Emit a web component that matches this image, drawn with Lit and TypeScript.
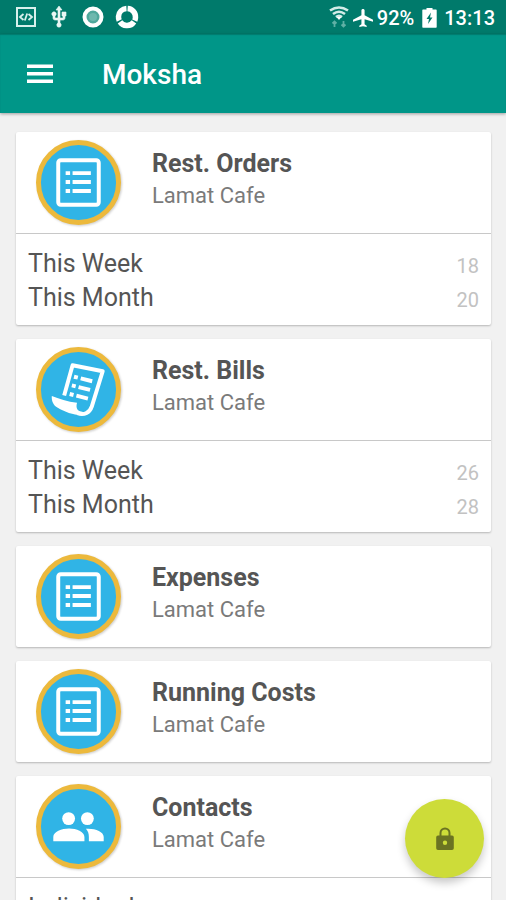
import { LitElement, html, svg, css, nothing } from "lit";
import { customElement, property } from "lit/decorators.js";

type IconName = "list" | "bill" | "people";

interface Row {
  label: string;
  count: string;
}

interface Section {
  title: string;
  subtitle: string;
  icon: IconName;
  rows: Row[];
}

const sections: Section[] = [
  {
    title: "Rest. Orders",
    subtitle: "Lamat Cafe",
    icon: "list",
    rows: [
      { label: "This Week", count: "18" },
      { label: "This Month", count: "20" },
    ],
  },
  {
    title: "Rest. Bills",
    subtitle: "Lamat Cafe",
    icon: "bill",
    rows: [
      { label: "This Week", count: "26" },
      { label: "This Month", count: "28" },
    ],
  },
  { title: "Expenses", subtitle: "Lamat Cafe", icon: "list", rows: [] },
  { title: "Running Costs", subtitle: "Lamat Cafe", icon: "list", rows: [] },
  {
    title: "Contacts",
    subtitle: "Lamat Cafe",
    icon: "people",
    rows: [{ label: "Individuals", count: "" }],
  },
];

const glyphs = {
  list: svg`
    <rect x="22.5" y="20.5" width="41" height="45" rx="2.5" fill="none" stroke="#fff" stroke-width="4" />
    <path d="M30 31.5h4.500v4h-4.500zM37 31.500h18.500v4H37zM30 40.500h4.500v4h-4.500zM37 40.500h18.500v4H37zM30 49.500h4.500v4h-4.500zM37 49.500h18.500v4H37z" fill="#fff" />
  `,
  bill: svg`
    <path d="M28.500 49 37 18.500 67.500 24.500 56.500 60C54.500 66 49 69.500 42 67" fill="none" stroke="#fff" stroke-width="4" stroke-linejoin="round" />
    <path d="M16 49.500C23 52.500 32 55 41.500 56.500C40 62 42 65.500 47 65.500V69C39 69.500 29 65.500 22 61.500C17.500 59 15.500 54.500 16 49.500z" fill="#fff" />
    <g transform="rotate(14 45 41)" fill="#fff">
      <path d="M36 30h4v4h-4zM43 30h12v4H43zM36 39h4v4h-4zM43 39h12v4H43zM36 48h4v4h-4zM43 48h12v4H43z" />
    </g>
  `,
  people: svg`
    <circle cx="33" cy="35" r="6.500" fill="#fff" />
    <circle cx="52" cy="35" r="6.500" fill="#fff" />
    <path d="M17.500 58V53.500C17.500 48.500 26 45 33.500 45S49 48.500 49 53.500V58zM50.500 45.300C59 44.500 68.500 48 68.500 53.500V58H53.500V53.500C53.500 50 52.500 47.500 50.500 45.300z" fill="#fff" />
  `,
};

@customElement("status-bar")
export class StatusBar extends LitElement {
  static styles = css`
    :host {
      display: flex;
      align-items: center;
      justify-content: space-between;
      height: 34px;
      padding: 0 11px 0 16px;
      background: #007a6b;
      color: #fff;
      font-size: 20px;
      line-height: 24px;
      font-weight: 500;
    }
    .group {
      display: flex;
      align-items: center;
    }
    .notices {
      gap: 11px;
    }
    .system {
      padding-top: 2px;
    }
    .percent {
      margin: 0 8px 0 4px;
    }
    .clock {
      margin-left: 7px;
    }
    .plane {
      margin-left: 4px;
    }
    svg {
      display: block;
    }
  `;

  render() {
    return html`
      <div class="group notices">
        <svg width="20" height="22" viewBox="0 0 20 22" fill="none" stroke="#d8f0ec" aria-hidden="true">
          <rect x="1" y="2" width="18" height="18" stroke-width="2" />
          <path d="M7.500 8 4 11l3.500 3M12.500 8l3.500 3-3.500 3M11.200 7.500 8.800 14.500" stroke-width="1.800" />
        </svg>
        <svg width="24" height="24" viewBox="0 0 24 24" fill="#e8f6f4" stroke="#e8f6f4" stroke-width="0.6" aria-hidden="true">
          <path d="M15 7v4h1v2h-3V5h2l-3-4-3 4h2v8H8v-2.070c.7-.370 1.200-1.080 1.200-1.930 0-1.210-.990-2.200-2.200-2.200S4.800 7.790 4.800 9c0 .850.500 1.560 1.200 1.930V13c0 1.110.890 2 2 2h3v3.050c-.710.370-1.200 1.100-1.200 1.950a2.200 2.200 0 0 0 4.400 0c0-.850-.490-1.580-1.200-1.950V15h3c1.110 0 2-.890 2-2v-2h1V7z" />
        </svg>
        <svg width="22" height="22" viewBox="0 0 22 22" aria-hidden="true">
          <circle cx="11" cy="11" r="8.500" fill="#4fa89c" stroke="#fff" stroke-width="4" />
          <circle cx="11" cy="11" r="4" fill="#6db8ae" />
        </svg>
        <svg width="24" height="24" viewBox="0 0 24 24" fill="none" stroke="#fff" stroke-width="5.500" aria-hidden="true">
          <circle cx="12" cy="12" r="8.500" stroke-dasharray="16.300 1.500" transform="rotate(-86 12 12)" />
        </svg>
      </div>
      <div class="group system">
        <svg width="20" height="24" viewBox="0 0 20 24" aria-hidden="true">
          <path d="M1 4.500Q10-1.500 19 4.500M4 8Q10 3.500 16 8M7 11Q10 8.500 13 11" fill="none" stroke="#d3ece8" stroke-width="2.600" />
          <path d="M7.500 11h5l-2.500 3z" fill="#fff" />
          <path d="M5.500 21v-5M3.500 17.500l2-2 2 2M14.500 15v5M12.500 18.500l2 2 2-2" fill="none" stroke="#5fb0a5" stroke-width="1.800" />
        </svg>
        <svg class="plane" width="20" height="20" viewBox="2 1 19 22" preserveAspectRatio="none" fill="#fff" aria-hidden="true">
          <path d="M21 16v-2l-8-5V3.500c0-.830-.670-1.500-1.500-1.500S10 2.670 10 3.500V9l-8 5v2l8-2.500V19l-2 1.500V22l3.500-1 3.500 1v-1.500L13 19v-5.500l8 2.500z" />
        </svg>
        <span class="percent">92%</span>
        <svg width="15" height="20" viewBox="0 0 15 20" aria-hidden="true">
          <path d="M4.500 0h6v1.500H14a.7.7 0 0 1 .7.700V19a.7.7 0 0 1-.7.700H1A.7.700 0 0 1 .300 19V2.200A.7.700 0 0 1 1 1.500h3.500z" fill="#fff" />
          <path d="M9 4.500 4.500 11H7L6 16l4.500-6.500H8z" fill="#007a6b" />
        </svg>
        <span class="clock">13:13</span>
      </div>
    `;
  }
}

@customElement("summary-card")
export class SummaryCard extends LitElement {
  @property({ attribute: false }) section!: Section;

  static styles = css`
    :host {
      display: block;
      background: #fff;
      border-radius: 2px;
      box-shadow: 0 1px 2px rgba(0, 0, 0, 0.24);
    }
    .head {
      display: flex;
      align-items: center;
      gap: 31px;
      min-height: 101px;
      padding: 0 20px;
    }
    .divided {
      border-bottom: 1px solid #c8c8c8;
    }
    .badge {
      flex: none;
      width: 85px;
      height: 85px;
      filter: drop-shadow(1px 1px 1px rgba(0, 0, 0, 0.2));
    }
    .names {
      padding-bottom: 6px;
    }
    .title {
      margin: 0;
      font-size: 25px;
      line-height: 32px;
      font-weight: 700;
      color: #555;
    }
    .subtitle {
      margin: 0;
      font-size: 22px;
      line-height: 32px;
      color: #7a7a7a;
    }
    .rows {
      margin: 0;
      padding: 13px 12px 10px;
    }
    .row {
      display: flex;
      justify-content: space-between;
      align-items: center;
      height: 34px;
      line-height: 34px;
    }
    .label {
      font-size: 25px;
      color: #555;
    }
    .count {
      margin: 0;
      padding-top: 4px;
      font-size: 20px;
      color: #c2c2c2;
    }
  `;

  render() {
    const { title, subtitle, icon, rows } = this.section;
    return html`
      <header class="head ${rows.length ? "divided" : ""}">
        <svg class="badge" viewBox="0 0 86 86" aria-hidden="true">
          <circle cx="43" cy="43" r="40.500" fill="#30b4e6" stroke="#ecb93c" stroke-width="5" />
          ${glyphs[icon]}
        </svg>
        <div class="names">
          <h2 class="title">${title}</h2>
          <p class="subtitle">${subtitle}</p>
        </div>
      </header>
      ${rows.length
        ? html`<dl class="rows">
            ${rows.map(
              (row) => html`<div class="row">
                <dt class="label">${row.label}</dt>
                <dd class="count">${row.count}</dd>
              </div>`
            )}
          </dl>`
        : nothing}
    `;
  }
}

@customElement("app-root")
export class AppRoot extends LitElement {
  static styles = css`
    :host {
      display: flex;
      flex-direction: column;
      position: relative;
      height: 100vh;
      overflow: hidden;
      background: #f1f1f1;
      font-family: Roboto, "Noto Sans", sans-serif;
    }
    .bar {
      display: flex;
      align-items: center;
      flex: none;
      gap: 48px;
      height: 79px;
      padding: 0 26px;
      background: #009688;
      box-shadow: 0 1px 3px rgba(0, 0, 0, 0.35), inset 0 1px 1px rgba(0, 60, 50, 0.3);
    }
    status-bar {
      flex: none;
    }
    .menu {
      padding: 0;
      border: 0;
      background: none;
      cursor: pointer;
    }
    .menu svg,
    .lock svg {
      display: block;
    }
    .name {
      margin: 0;
      padding-top: 2px;
      font-size: 28px;
      line-height: 32px;
      font-weight: 500;
      color: #fff;
    }
    .list {
      display: flex;
      flex-direction: column;
      flex: 1;
      min-height: 0;
      gap: 14px;
      padding: 19px 15px 0 16px;
      overflow: hidden;
    }
    summary-card {
      flex: none;
    }
    .lock {
      position: absolute;
      right: 22px;
      bottom: 22px;
      display: grid;
      place-items: center;
      width: 79px;
      height: 79px;
      padding: 0;
      border: 0;
      border-radius: 50%;
      background: #cddc39;
      box-shadow: 0 5px 9px rgba(0, 0, 0, 0.22);
      cursor: pointer;
    }
  `;

  render() {
    return html`
      <status-bar></status-bar>
      <header class="bar">
        <button class="menu" aria-label="Open menu">
          <svg width="28" height="20" viewBox="0 0 28 20" fill="#fff">
            <path d="M1 0.500h26v3.500H1zM1 8h26v3.500H1zM1 15.500h26v3.500H1z" />
          </svg>
        </button>
        <h1 class="name">Moksha</h1>
      </header>
      <main class="list">
        ${sections.map((section) => html`<summary-card .section=${section}></summary-card>`)}
      </main>
      <button class="lock" aria-label="Lock">
        <svg width="18" height="24" viewBox="0 0 18 24">
          <path d="M4.500 9V6a4.500 4.500 0 0 1 9 0v3" fill="none" stroke="#6b7322" stroke-width="2" />
          <path d="M2 8.500h14a1.800 1.800 0 0 1 1.800 1.800v11a1.800 1.800 0 0 1-1.800 1.800H2a1.800 1.800 0 0 1-1.800-1.800v-11A1.800 1.800 0 0 1 2 8.500zM9 13.500a2.200 2.200 0 1 0 0 4.400 2.200 2.200 0 0 0 0-4.400z" fill="#6b7322" fill-rule="evenodd" />
        </svg>
      </button>
    `;
  }
}
